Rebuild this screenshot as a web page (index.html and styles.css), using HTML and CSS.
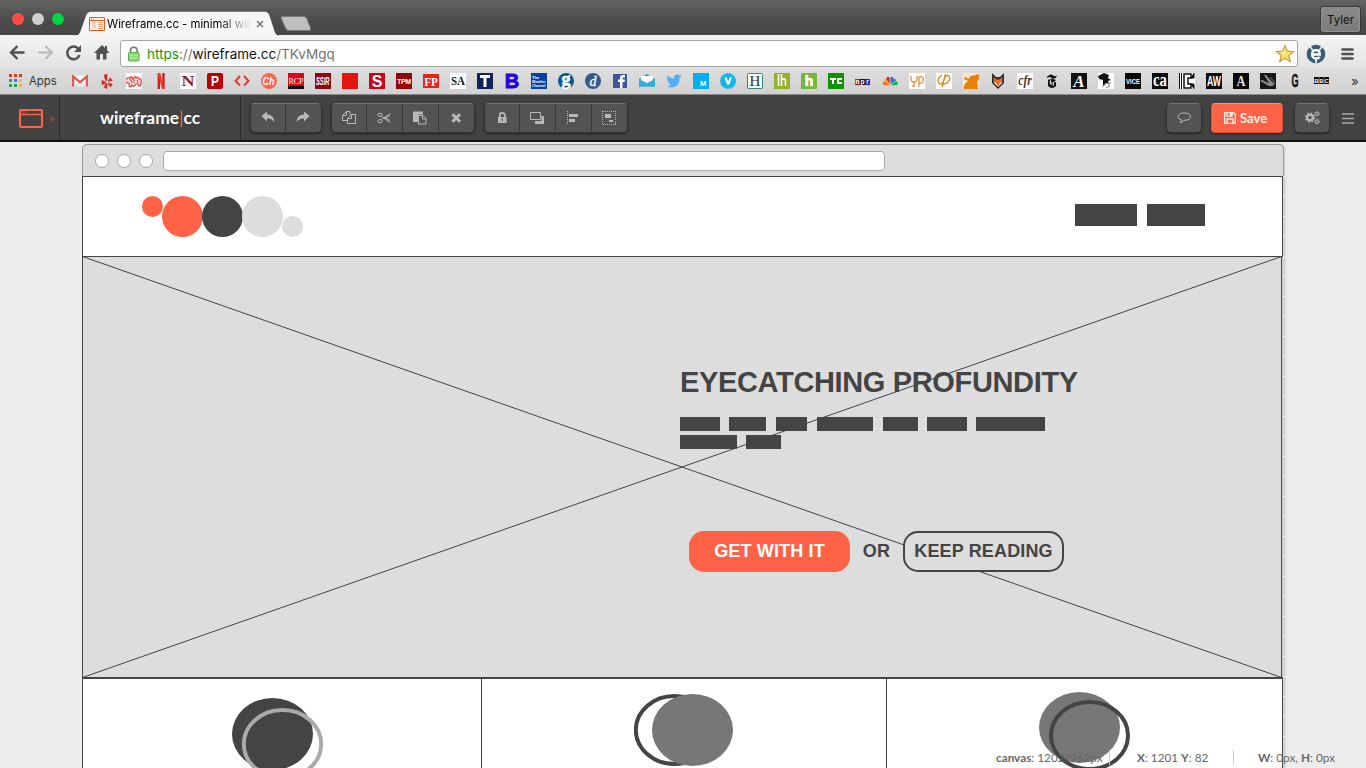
FILE: index.html
```html
<!DOCTYPE html>
<html lang="en">
<head>
<meta charset="utf-8">
<title>Wireframe.cc</title>
<link rel="stylesheet" href="styles.css">
</head>
<body>
<header class="titlebar">
  <div class="lights"><i class="light red"></i><i class="light grey"></i><i class="light green"></i></div>
  <div class="tab">
    <svg class="tab-shape" width="204" height="25" viewBox="0 0 204 25"><path d="M0 25C3 24 4 23 5 21L11 4Q12.500 .5 16 .5H190Q193 .5 194.500 4L200 21Q201 24 204 25Z" fill="#f6f6f6" stroke="#333" stroke-opacity=".35"/><path d="M1 24h202v1H1z" fill="#f5f5f5"/></svg>
    <svg class="favicon" width="16" height="14" viewBox="0 0 16 14"><path d="M.5.5h15v13H.5zM1 3.500h14" fill="#fff4ed" stroke="#f05a1e"/><path d="M2 2h1M4 2h1" stroke="#f05a1e"/><path d="M3 6h4M3 8h4M3 10h4M9 5.500h5M9 7.500h5M9 9.500h5M9 11.500h5" stroke="#f8a582"/></svg>
    <span class="tab-title">Wireframe.cc - minimal wir</span>
    <svg class="close" width="8" height="8" viewBox="0 0 8 8"><path d="M1 1l6 6M7 1L1 7" stroke="#777" stroke-width="1.500"/></svg>
  </div>
  <svg class="newtab" width="32" height="16" viewBox="0 0 32 16"><path d="M3 .5H24Q26 .5 27 3L30.500 12Q31 14.500 29 14.500H9Q6.500 14.500 5.500 12L1 2Q1 .5 3 .5Z" fill="#bebebe" stroke="#777"/></svg>
  <span class="profile">Tyler</span>
</header>

<nav class="navbar">
  <svg width="110" height="30" viewBox="0 0 110 30" class="nav-icons">
    <path d="M17.500 7l-6.500 6.500 6.500 6.500M11.500 13.500h13" fill="none" stroke="#505050" stroke-width="2.400"/>
    <path d="M45.500 7l6.500 6.500-6.500 6.500M51 13.500H38" fill="none" stroke="#b9b9b9" stroke-width="2"/>
    <path d="M78.500 10A6.300 6.300 0 1 0 79.500 16" fill="none" stroke="#505050" stroke-width="2.500"/><path d="M81 6v7h-7z" fill="#505050"/>
    <path d="M94 14l8-8 3 3V7h2v4l2 2.500V14h-2.500v6.500h-3.500V15h-3v5.500h-3.500V14z" fill="#505050"/>
  </svg>
  <div class="address">
    <svg class="lock" width="14" height="16" viewBox="0 0 14 16"><path d="M3.500 8V4.500a3.300 3.300 0 0 1 6.600 0V8" fill="none" stroke="#777" stroke-width="1.600"/><rect x="1.500" y="6.500" width="10.500" height="8.500" rx="1" fill="#8fdc78" stroke="#56ab43"/><path d="M2 9.500h9.500M2 12h9.500" stroke="#b2eba1"/></svg>
    <span class="url"><b class="secure">https</b><b class="muted">://</b>wireframe.cc<b class="muted">/TKvMgq</b></span>
    <svg class="star" width="20" height="20" viewBox="0 0 20 20"><path d="M10 1.500l2.400 5.600 6.100.5-4.700 4 1.500 6L10 14.400l-5.300 3.200 1.500-6-4.700-4 6.100-.5z" fill="#ffdf65" stroke="#c6923c" stroke-width="1.100"/><path d="M10 4v6l-5-1.500 3.500-.5z" fill="#fff3ae"/></svg>
  </div>
  <svg width="20" height="20" viewBox="0 0 20 20"><circle cx="10" cy="10" r="9.300" fill="#395d73"/><path d="M4 2.500l2.500 3.500M16 2.500L13.500 6M10 15v4" stroke="#fff" stroke-width="1.500"/><path d="M6.500 10.500h7.300q0-4.300-3.800-4.300t-3.900 4.300q.2 4 4 4 2.400 0 3.600-1.500" fill="none" stroke="#fff" stroke-width="2.300"/></svg>
  <svg class="menu" width="14" height="14" viewBox="0 0 14 14"><path d="M1.500 2.500h10M1.500 7h10M1.500 11.500h10" stroke="#505050" stroke-width="2.700" stroke-linecap="round"/></svg>
</nav>

<nav class="bookmarks">
  <svg class="apps" width="13" height="13" viewBox="0 0 13 13"><path d="M0 0h3v3H0zM5 0h3v3H5zM10 0h3v3h-3z" fill="#ea3323"/><path d="M0 5h3v3H0zM0 10h3v3H0zM5 10h3v3H5z" fill="#22a45b"/><path d="M5 5h3v3H5z" fill="#277dea"/><path d="M10 5h3v3h-3zM10 10h3v3h-3z" fill="#f9b716"/></svg>
  <span class="apps-label">Apps</span>
  <div class="marks">
    <svg viewBox="0 0 16 16"><path d="M1 2.500h14v11H1z" fill="#f5f2f1"/><path d="M3 13L8 8.500l5 4.500" fill="none" stroke="#ccc"/><path d="M1.200 13.500V3.500L8 9.200l6.800-5.700v10" fill="none" stroke="#dc4b40" stroke-width="2"/></svg>
    <svg viewBox="0 0 16 16"><path d="M5 2.200L8 1.200v6.300L6.800 7.700zM3 7.500l3.700 1.700v1.200L3 11.600zM8 10.500v5l-3-1.200 2-3.700zM9.500 10l3.700 1.200-1.700 2.800-2.400-3zM9.200 8.500l1.800-3.800 2.300 2.700z" fill="#d3291c" stroke="#d3291c" stroke-linejoin="round" stroke-width=".6"/></svg>
    <svg viewBox="0 0 16 16"><path d="M0 0h16v16H0z" fill="#fff"/><path d="M1 6q1-3 3 0 0-3 2-2 1 4 2 1 1-3 2 0 2-2 3 1 3-1 2 4 0 4-2 3-1-3-3-2-2 4-4 1-1 3-3 1 1-3-1-3-4-1-3-4z" fill="#f9d9d7" stroke="#e13b32" stroke-width="1.200"/><path d="M5 7l1 3M8 7v3M11 7l1 3" stroke="#e13b32"/></svg>
    <svg viewBox="0 0 16 16"><path d="M5.800 0v16M10.500 0v16" stroke="#ca1c17" stroke-width="2.300"/><path d="M4.700 0h2.600l4.200 16H9z" fill="#f4362b"/></svg>
    <svg viewBox="0 0 16 16"><path d="M0 0h16v16H0z" fill="#fff"/><text class="serif" x="8" y="12.500" font-size="14" textLength="13" lengthAdjust="spacingAndGlyphs" fill="#8d1c2a">N</text></svg>
    <svg viewBox="0 0 16 16"><rect width="16" height="16" rx="2" fill="#b90007"/><text class="sans" x="8" y="13" font-size="14" textLength="8" lengthAdjust="spacingAndGlyphs" fill="#fff">P</text></svg>
    <svg viewBox="0 0 16 16"><path d="M6 3L1.500 8 6 12.500M10 3l4.500 5-4.500 4.500" fill="none" stroke="#e5372b" stroke-width="2"/></svg>
    <svg viewBox="0 0 16 16"><circle cx="8" cy="8" r="8" fill="#fb6651"/><text class="sans italic" x="7.600" y="12" font-size="11" textLength="12" lengthAdjust="spacingAndGlyphs" fill="#fff">Ch</text></svg>
    <svg viewBox="0 0 16 16"><path d="M0 0h16v16H0z" fill="#d8061d"/><path d="M0 13h16v3H0z" fill="#111"/><text class="serif thin" x="8" y="10.500" font-size="8.500" textLength="15" lengthAdjust="spacingAndGlyphs" fill="#fff">RCP</text></svg>
    <svg viewBox="0 0 16 16"><path d="M0 0h16v16H0z" fill="#8d0711"/><text class="sans italic" x="7.700" y="12" font-size="10.500" textLength="13.500" lengthAdjust="spacingAndGlyphs" fill="#fff">SSIR</text></svg>
    <svg viewBox="0 0 16 16"><path d="M0 0h16v16H0z" fill="#e5140d"/></svg>
    <svg viewBox="0 0 16 16"><path d="M0 0h16v16H0z" fill="#c4061b"/><text class="sans" x="8" y="13.500" font-size="16" fill="#fff">S</text></svg>
    <svg viewBox="0 0 16 16"><path d="M0 0h16v16H0z" fill="#960206"/><text class="sans" x="8" y="10.500" font-size="7" textLength="14" fill="#fff">TPM</text></svg>
    <svg viewBox="0 0 16 16"><path d="M0 1h16v14H0z" fill="#e7211f"/><text class="serif" x="8" y="12.500" font-size="12" textLength="13.500" lengthAdjust="spacingAndGlyphs" fill="#fff">FP</text></svg>
    <svg viewBox="0 0 16 16"><path d="M0 0h16v16H0z" fill="#fff"/><text class="serif" x="8" y="11.500" font-size="12.500" textLength="14" lengthAdjust="spacingAndGlyphs" fill="#111">SA</text></svg>
    <svg viewBox="0 0 16 16"><path d="M0 0h16v16H0z" fill="#10225b"/><path d="M3 2h10v3H9.500v9h-3V5H3z" fill="#fff"/></svg>
    <svg viewBox="0 0 16 16" class="spill"><text class="sans" x="8" y="15" font-size="20" stroke="#2500da" stroke-width=".9" fill="#2500da">B</text></svg>
    <svg viewBox="0 0 16 16"><path d="M0 0h16v16H0z" fill="#0841a0"/><g class="left" font-size="4" fill="#fff"><text x="1" y="6">The</text><text x="1" y="10" textLength="13.500" lengthAdjust="spacingAndGlyphs">Weather</text><text x="1" y="14" textLength="13.500" lengthAdjust="spacingAndGlyphs">Channel</text></g></svg>
    <svg viewBox="0 0 16 16" class="spill"><circle cx="8" cy="8" r="8" fill="#075a90"/><text class="serif" x="8" y="11.500" font-size="18" stroke="#fff" stroke-width=".7" fill="#fff">g</text></svg>
    <svg viewBox="0 0 16 16"><circle cx="8" cy="8" r="8" fill="#35588e"/><text class="serif italic thin" x="8" y="12.500" font-size="14" stroke="#fff" stroke-width=".3" fill="#fff">d</text></svg>
    <svg viewBox="0 0 16 16"><path d="M1 1h14v14H1z" fill="#3b5998"/><path d="M8 15V9H6V6.500h2V5q0-3 3-3h2v2.500h-1.500q-1 0-1 1v1H13L12.500 9h-2v6z" fill="#fff"/></svg>
    <svg viewBox="0 0 16 16"><path d="M0 6l8-5 8 5v7.500H0z" fill="#1d9fc8"/><path d="M2 3h12v5l-6 3-6-3z" fill="#fff"/><path d="M0 6l8 4 8-4v7.500H0z" fill="#36aed6"/></svg>
    <svg viewBox="0 0 16 16"><path d="M15.500 4l-2 1Q13.500 14 6 14.500q-3 0-5-1.500 3 0 4-1.500-2 0-3-2h1.500Q1 8.500 1 6l1.500.5Q.5 4.500 1.500 2.500 4 5 8 5.500q0-4 3-4 1.500 0 2.500 1l2-.5-1 1.500z" fill="#55acee"/></svg>
    <svg viewBox="0 0 16 16"><path d="M0 0h16v16H0z" fill="#06aef0"/><text class="sans" x="10" y="13" font-size="7.500" fill="#fff">M</text></svg>
    <svg viewBox="0 0 16 16"><circle cx="8" cy="8" r="7.300" fill="#18b5e9" stroke="#18b5e9" stroke-width="1.500" stroke-dasharray="2 .7"/><path d="M4.500 4.500h2.300L8.200 8.500l1.500-4h2.200L9.300 11.500H7z" fill="#fff"/></svg>
    <svg viewBox="0 0 16 16"><rect x=".5" y=".5" width="15" height="15" rx="1" fill="#f3faf7" stroke="#34857d"/><text class="serif thin" x="8" y="13" font-size="15" fill="#333">H</text></svg>
    <svg viewBox="0 0 16 16"><path d="M0 0h16v16H0z" fill="#91b32c"/><path d="M4.500 1v12M7.500 1v12M7.500 7q4-3 4 1v5" stroke="#fff" stroke-width="1.600" fill="none"/></svg>
    <svg viewBox="0 0 16 16"><rect width="16" height="16" rx="1" fill="#72b63a"/><text class="sans" x="8" y="13" font-size="14" stroke="#fff" stroke-width=".7" fill="#fff">h</text></svg>
    <svg viewBox="0 0 16 16"><path d="M0 0h16v16H0z" fill="#109300"/><path d="M2 5h6v2H6v4H4V7H2zM9 5h5v2h-3v2h3v2H9z" fill="#fff"/></svg>
    <svg viewBox="0 0 16 16"><path d="M0 6h5v6H0z" fill="#e30d14"/><path d="M5 6h5v6H5z" fill="#111"/><path d="M10 6h5v6h-5z" fill="#1c1eea"/><g class="sans" font-size="6.500" fill="#fff"><text x="2.500" y="10.500">n</text><text x="7.500" y="10.500">p</text><text x="12.500" y="10.500">r</text></g></svg>
    <svg viewBox="0 0 16 16"><path d="M8 12.500L1.500 12Q-.5 9.500 2 8.500L4 8.800z" fill="#f37021"/><path d="M7.500 11.500L2.500 8Q2 5 5 5.500z" fill="#eab32b"/><path d="M7.500 11L4.500 6Q5 2.500 7.500 4.500z" fill="#d71a43"/><path d="M8.500 11l-.2-6.500Q11 2.500 11.700 6z" fill="#6460aa"/><path d="M8.600 11.500L11.500 6Q14 5 13.700 8z" fill="#0089d0"/><path d="M9 12.500l5-4.200q3 1.200 1 3.700z" fill="#0db14b"/></svg>
    <svg viewBox="0 0 16 16"><path d="M0 0h16v16H0z" fill="#fff"/><path d="M2 3v3q0 3 3 3t3-3V3M5 8v5M3 13h3M10 14V4q5-1 4.500 3T10 10" fill="none" stroke="#e6964b" stroke-width="1.400"/></svg>
    <svg viewBox="0 0 16 16"><path d="M0 0h16v16H0z" fill="#fff"/><path d="M9.500 1L6 14M6 2Q0 6 3 10q3 3 5-3 2-6 5-4 2 3-1 6-3 3-6 2" fill="none" stroke="#e88926" stroke-width="1.400"/></svg>
    <svg viewBox="0 0 16 16"><path d="M0 0h16v16H0z" fill="#fbe9d8"/><path d="M1 5l2-1 2 2 3-3 2-1 1 1 3-2 2 1v4l-2 3 1 6v1H1q-1-5 4-8-2-1-4-2z" fill="#e78109"/></svg>
    <svg viewBox="0 0 16 16"><path d="M2 0l4 4h4l4-4v10l-6 6-6-6z" fill="#30302d"/><path d="M3.500 4l3 2.500h3l3-2.500-.5 6-4 4-4-4z" fill="#ec6b36"/><path d="M3.500 9l2.500 1 2 4zM12.500 9L10 10l-2 4z" fill="#fff"/></svg>
    <svg viewBox="0 0 16 16"><path d="M0 0h16v16H0z" fill="#fff"/><text class="serif italic" x="8" y="12" font-size="14" textLength="13.500" lengthAdjust="spacingAndGlyphs" fill="#503126">cfr</text></svg>
    <svg viewBox="0 0 16 16"><path d="M4 3q3-3 6 0 2 1 3-1-1 5-5 3Q5 3 4 5q-2-1 0-2zM12 7q-5-2-5 0-1 3 5 2v4q-4 4-8 0V7q2-1 3-1-2 2-1 5 3 3 4 1V9" fill="#111"/><path d="M8 5v9" stroke="#111"/></svg>
    <svg viewBox="0 0 16 16"><path d="M0 0h16v16H0z" fill="#111"/><text class="serif italic" x="8" y="14" font-size="17" fill="#fff">A</text></svg>
    <svg viewBox="0 0 16 16"><path d="M0 0h16v16H0z" fill="#fff"/><path d="M0 3l6-3 5 2-1 3 3 2-3 1 1 3-3-1-3 3V7L1 6z" fill="#111"/><path d="M4 14l4-3M10 13l3-4M8 15l4-2" stroke="#888" fill="none"/></svg>
    <svg viewBox="0 0 16 16"><path d="M0 0h16v16H0z" fill="#080808"/><text class="sans" x="8" y="10.500" font-size="7.500" textLength="14" lengthAdjust="spacingAndGlyphs" fill="#fff">VICE</text></svg>
    <svg viewBox="0 0 16 16"><path d="M0 0h16v16H0z" fill="#080808"/><text class="serif" x="8" y="13" font-size="19" textLength="14" lengthAdjust="spacingAndGlyphs" fill="#fff">ca</text></svg>
    <svg viewBox="0 0 16 16"><path d="M0 0h16v16H0z" fill="#fff"/><path d="M.5 0v16M2.500 0v16M15 0v5h-4M15 16v-5h-4" stroke="#111"/><path d="M12 1H5v14h7v-4H9V5h3z" fill="#fff" stroke="#111" stroke-width="1.500"/></svg>
    <svg viewBox="0 0 16 16"><path d="M0 0h16v16H0z" fill="#080808"/><text class="sans" x="8" y="13" font-size="15" textLength="14" lengthAdjust="spacingAndGlyphs" fill="#fff">AW</text></svg>
    <svg viewBox="0 0 16 16"><path d="M0 0h16v16H0z" fill="#080808"/><text class="serif" x="8" y="13" font-size="15" textLength="9" lengthAdjust="spacingAndGlyphs" fill="#ddd">A</text></svg>
    <svg viewBox="0 0 16 16"><path d="M0 0h16v16H0z" fill="#181818"/><path d="M0 8q2-2 4 0l7 3 2 2H9zM4 2q2-1 3 1l7 8-1 2-4-3z" fill="#888"/><path d="M10 4q3 3 5 7" stroke="#777" fill="none"/></svg>
    <svg viewBox="0 0 16 16"><text class="sans" x="8" y="14" font-size="18" textLength="7" lengthAdjust="spacingAndGlyphs" stroke="#111" stroke-width=".5" fill="#111">G</text></svg>
    <svg viewBox="0 0 16 16"><path d="M0 4h4.700v7H0zM5.200 4h4.600v7H5.200zM10.300 4H15v7h-4.700z" fill="#080808"/><g class="sans" font-size="6" fill="#fff"><text x="2.400" y="9.700">B</text><text x="7.500" y="9.700">B</text><text x="12.600" y="9.700">C</text></g></svg>
  </div>
  <span class="more">»</span>
</nav>

<div class="toolbar">
  <div class="shape"><svg width="38" height="22" viewBox="0 0 38 22"><rect x="1" y="3" width="22" height="17" rx="1" fill="none" stroke="#ff6347" stroke-width="2"/><path d="M1 7.500h22" stroke="#ff6347" stroke-width="1.500"/><path d="M3 5h1.500M5.500 5H7" stroke="#ff6347" stroke-width="1"/><path d="M31 8l6 4-6 4z" fill="#79483e"/></svg></div>
  <div class="brand">wireframe<i>|</i>cc</div>
  <div class="tools">
    <div class="group">
      <button><svg viewBox="0 0 16 16"><path d="M1.500 6L7 1.500v3q7 0 7.500 8-2.500-4.500-7.500-4v3z"/></svg></button>
      <button><svg viewBox="0 0 16 16"><path d="M14.500 6L9 1.500v3q-7 0-7.500 8 2.500-4.500 7.500-4v3z"/></svg></button>
    </div>
    <div class="group">
      <button><svg viewBox="0 0 16 16"><path class="line" d="M9 1.500H5.500L1.500 5.500v5h5M5.500 1.500v4h-4M9 1.500v3M10.500 4.500h4v9h-8V8.500zM10.500 4.500v4h-4"/></svg></button>
      <button><svg viewBox="0 0 16 16"><path class="line" d="M5.500 6.500l9 6M5.500 9.500l9-6M8.500 8.500l5.500-3M8.500 7.500l5.500 3"/><ellipse class="line" cx="4" cy="4.800" rx="2.200" ry="1.600"/><ellipse class="line" cx="4" cy="11.200" rx="2.200" ry="1.600"/></svg></button>
      <button><svg viewBox="0 0 16 16"><path d="M1 1.500h10v3H6.500V12H1z"/><path class="line" d="M6.500 5.500h4.500l3 3v5.500H6.500zM10.500 5.500v3.500H14"/></svg></button>
      <button><svg viewBox="0 0 16 16"><path d="M4.500 11.800L12 4.300M4.500 4.300l7.500 7.500" stroke="#bbb" stroke-width="3"/></svg></button>
    </div>
    <div class="group">
      <button><svg viewBox="0 0 16 16"><path d="M4 7h8.500v6H4z"/><path class="line" d="M5.700 7V5.500a2.600 2.600 0 0 1 5.200 0V7" stroke-width="1.700"/><path d="M8.200 8v3" stroke="#555"/></svg></button>
      <button><svg viewBox="0 0 16 16"><path class="line" d="M1.500 2.500h10v7h-10z"/><path d="M12.500 6H15v8H6v-3h6.500z"/></svg></button>
      <button><svg viewBox="0 0 16 16"><path class="line" d="M2.500 1v14" stroke-dasharray="1 1"/><path d="M4 4h9v3H4zM4 9h6v3H4z"/></svg></button>
      <button><svg viewBox="0 0 16 16"><path class="line" d="M2 1.500h13M2 14.500h13M1.500 1v14M14.500 1v14" stroke-dasharray="1 1"/><path d="M4 4h6v4H4zM8 10h4v2H8z"/></svg></button>
    </div>
  </div>
  <div class="actions">
    <div class="group"><button><svg viewBox="0 0 16 16"><path class="line" d="M4 12.500q1.500-1 1.300-2.700Q2 9 2 6.700 2 3 8.200 3t6.200 3.700Q14.400 10.300 8 10.300 6.500 12.500 4 12.500z"/></svg></button></div>
    <button class="save"><svg width="12" height="12" viewBox="0 0 12 12"><path d="M.7.7h8.800l1.800 1.800v8.800H.7zM3 .7v3.500h5V.7M3 11V7h6v4" fill="none" stroke="#fff0ec" stroke-width="1.300"/><path d="M6 1h2v3H6z" fill="#fff0ec"/></svg>Save</button>
    <div class="group"><button><svg viewBox="0 0 16 16"><circle class="line" cx="6" cy="7.500" r="2.900" stroke-width="2.300"/><circle class="line" cx="6" cy="7.500" r="4.400" stroke-width="1.400" stroke-dasharray="1.728 1.728"/><circle class="line" cx="13" cy="3.700" r="1.500"/><circle class="line" cx="13" cy="11.500" r="1.500"/><circle class="line" cx="13" cy="3.700" r="2.300" stroke-dasharray="1 .8"/><circle class="line" cx="13" cy="11.500" r="2.300" stroke-dasharray="1 .8"/></svg></button></div>
    <svg class="burger" width="12" height="11" viewBox="0 0 12 11"><path d="M0 1h12M0 5.500h12M0 10h12" stroke="#aaa" stroke-width="1.500"/></svg>
  </div>
</div>

<main class="workspace">
  <section class="canvas">
    <div class="browser"><i></i><i></i><i></i><span></span></div>
    <div class="page">
      <div class="page-head">
        <svg width="162" height="42" viewBox="0 0 162 42"><circle cx="10.500" cy="10.500" r="10.500" fill="#ff6347"/><circle cx="40.500" cy="20.500" r="20.500" fill="#ff6347"/><circle cx="80.500" cy="20.500" r="20.500" fill="#444"/><circle cx="120.500" cy="20.500" r="20.500" fill="#ddd"/><circle cx="150.500" cy="30.500" r="10.500" fill="#ddd"/></svg>
        <div class="links"><i class="w62"></i><i class="w58"></i></div>
      </div>
      <div class="hero">
        <svg class="cross" width="1200" height="422" viewBox="0 0 1200 422"><path d="M.5.5l1199 421M1199.500.5L.5 421.500M1199.500 0v422" fill="none" stroke="#444"/></svg>
        <h1>EYECATCHING PROFUNDITY</h1>
        <div class="words lead"><i class="w40"></i><i class="w37"></i><i class="w31"></i><i class="w56"></i><i class="w35"></i><i class="w40"></i><i class="w69"></i></div>
        <div class="words"><i class="w57"></i><i class="w35"></i></div>
        <div class="cta"><span class="pill solid">GET WITH IT</span><span class="or">OR</span><span class="pill outline">KEEP READING</span></div>
      </div>
      <div class="columns">
        <div class="col first"><svg width="94" height="90" viewBox="0 0 94 90"><ellipse cx="40.500" cy="36" rx="40.500" ry="36" fill="#444"/><ellipse cx="50.500" cy="46" rx="38.700" ry="34" fill="none" stroke="#aaa" stroke-width="4"/></svg></div>
        <div class="col second"><svg width="102" height="90" viewBox="0 0 102 90"><ellipse cx="40.500" cy="36" rx="38.700" ry="34" fill="none" stroke="#444" stroke-width="4"/><ellipse cx="58.500" cy="36" rx="40.500" ry="36" fill="#777"/></svg></div>
        <div class="col third"><svg width="94" height="90" viewBox="0 0 94 90"><ellipse cx="40.500" cy="35.500" rx="40.500" ry="35.500" fill="#777"/><ellipse cx="50.500" cy="43.500" rx="38.500" ry="33.500" fill="none" stroke="#444" stroke-width="4"/></svg></div>
      </div>
    </div>
  </section>
  <aside class="resize"></aside>
</main>
<footer class="status"><span class="size"><b>canvas</b>: 1202/962px</span><span class="pos"><b>X</b>: 1201 <b>Y</b>: 82</span><span class="dims"><b>W</b>: 0px, <b>H</b>: 0px</span></footer>
</body>
</html>
```
FILE: styles.css
```css
* { box-sizing: border-box; }
body { margin: 0; width: 1366px; height: 768px; overflow: hidden; display: flex; flex-direction: column; background: #ededed; font-family: Inter, "Liberation Sans", sans-serif; position: relative; }
svg { display: block; flex: none; }
i { font-style: normal; }

/* Browser chrome */
.titlebar { height: 35px; flex: none; display: flex; align-items: flex-start; padding-left: 12px; background: linear-gradient(#636363, #4b4b4b 60%, #474747); }
.lights { display: flex; gap: 8px; padding-top: 13px; width: 63px; }
.light { width: 12px; height: 12px; border-radius: 50%; }
.light.red { background: #ff4a49; }
.light.grey { background: #cfcfcf; }
.light.green { background: #06d33f; }
.tab { position: relative; display: flex; align-items: center; width: 204px; height: 25px; margin-top: 11px; padding-left: 14px; }
.tab-shape { position: absolute; left: 0; top: 0; }
.favicon, .tab-title, .close { position: relative; }
.tab-title { width: 147px; margin-left: 2px; font-size: 11.3px; color: #000; white-space: nowrap; -webkit-mask-image: linear-gradient(90deg, #000 76%, transparent 98%); mask-image: linear-gradient(90deg, #000 76%, transparent 98%); }
.close { margin-left: 2px; }
.newtab { margin: 16px 0 0 1px; }
.profile { margin: 6px 5px 0 auto; width: 41px; height: 27px; border: 1px solid #383838; border-radius: 3px; background: linear-gradient(#8b8b8b, #7b7b7b); box-shadow: inset 0 0 0 1px #929292; text-align: center; font-size: 11.5px; line-height: 26px; color: #111; }
.navbar { height: 32px; flex: none; display: flex; align-items: center; background: linear-gradient(#f5f5f5, #e3e3e3); }
.nav-icons { width: 110px; margin: 6px 10px 0 0; }
.address { display: flex; align-items: center; width: 1178px; height: 27px; margin: 5px 8px 0 0; border: 1px solid #a6a6a6; border-radius: 3px; background: #fff; padding: 0 2px 0 6px; }
.navbar > svg:not(.nav-icons) { margin-top: 5px; }
.url { font-size: 13.5px; margin-left: 6px; color: #111; white-space: nowrap; }
.url b { font-weight: 400; }
.url .secure { color: #0a9b0a; }
.url .muted { color: #727272; }
.star { margin-left: auto; }
.menu { margin-left: 15px; }
.bookmarks { height: 28px; flex: none; display: flex; align-items: center; padding-left: 9px; background: linear-gradient(#dfdfdf, #d0d0d0); border-bottom: 1px solid #888; }
.apps-label { width: 43px; margin-left: 7px; font-size: 11.3px; color: #333; }
.marks { display: flex; gap: 11px; }
.marks svg { width: 16px; height: 16px; }
.marks .spill { overflow: visible; }
.marks text { text-anchor: middle; }
.marks .left text { text-anchor: start; font-family: "Liberation Sans", sans-serif; font-weight: 700; }
.sans { font-family: "Liberation Sans", sans-serif; font-weight: 700; }
.serif { font-family: "Liberation Serif", serif; font-weight: 700; }
.thin { font-weight: 400; }
.italic { font-style: italic; }
.more { margin-left: 21px; font-size: 13px; color: #333; }

/* Editor toolbar */
.toolbar { height: 47px; flex: none; display: flex; background: #424242; border-bottom: 2px solid #111; font-family: Lato, sans-serif; }
.shape { width: 60px; padding: 12px 0 0 19px; border-right: 1px solid #2b2b2b; }
.brand { width: 181px; border-right: 1px solid #2b2b2b; text-align: center; font-size: 17.4px; font-weight: 700; line-height: 46px; color: #fff; }
.brand i { color: #ff6347; font-weight: 400; }
.tools { display: flex; gap: 9px; padding: 8px 0 0 9px; }
.group { display: flex; height: 30px; border: 1px solid #333; border-top-color: #777; border-radius: 5px; overflow: hidden; background: #535353; box-shadow: 0 1px 2px #252525; }
.group button { width: 36px; padding: 0 0 0 9px; border: 0; border-right: 1px solid #383838; background: none; display: flex; align-items: center; }
.group button:first-child { width: 35px; }
.group button:last-child { width: 35px; border: 0; }
.group button:only-child { width: 34px; }
.group svg { width: 16px; height: 16px; fill: #b8b8b8; }
.group .line { fill: none; stroke: #b8b8b8; }
.actions { margin-left: auto; display: flex; gap: 9px; padding: 8px 12px 0 0; }
.save { width: 72px; height: 30px; margin-right: 2px; border: 1px solid #dd513a; border-top-color: #ff9277; border-radius: 4px; background: #ff6347; display: flex; align-items: center; gap: 4px; padding: 0 0 1px 12px; color: #fff0ec; font: 700 13px Lato, sans-serif; box-shadow: 0 1px 2px #252525; }
.burger { margin: 10px 0 0 3px; }

/* Wireframe document */
.workspace { flex: 1; min-height: 0; display: flex; align-items: stretch; padding: 2px 0 0 82px; }
.canvas { width: 1201px; height: 624px; }
.browser { width: 1202px; height: 32px; display: flex; align-items: center; gap: 8px; padding: 0 0 0 12px; background: #ddd; border: 1px solid #999; border-bottom: 0; border-radius: 5px 5px 0 0; box-shadow: 1px 0 2px #ccc; }
.browser i { width: 14px; height: 14px; border: 1px solid #aaa; border-radius: 50%; background: #fff; }
.browser span { width: 722px; height: 20px; margin-left: 2px; border: 1px solid #aaa; border-radius: 4px; background: #fff; }
.page { border: 1px solid #444; border-width: 1px 0 0 1px; height: 592px; background: #d2d2d2; }
.page-head { height: 80px; display: flex; justify-content: space-between; padding: 19px 77px 0 59px; border: 1px solid #444; border-width: 0 1px 1px 0; background: #fff; }
.links { display: flex; gap: 10px; padding-top: 8px; }
.links i { height: 22px; background: #444; }
.hero { position: relative; height: 420px; margin-right: 1px; padding: 111px 0 0 597px; background: #ddd; color: #444; font-family: "Liberation Sans", sans-serif; }
.cross { position: absolute; left: -1px; top: -1px; }
h1 { position: relative; height: 49px; margin: 0; font-size: 29px; letter-spacing: -.35px; line-height: 28px; white-space: nowrap; }
.words { position: relative; display: flex; gap: 9px; height: 14px; margin-bottom: 4px; }
.words i { background: #444; }
.lead i:nth-child(3), .lead i:nth-child(4), .lead i:nth-child(5) { margin-left: 1px; }
.w31 { width: 31px; } .w35 { width: 35px; } .w37 { width: 37px; } .w40 { width: 40px; } .w56 { width: 56px; } .w57 { width: 57px; } .w58 { width: 58px; } .w62 { width: 62px; } .w69 { width: 69px; }
.cta { position: relative; display: flex; align-items: center; margin: 82px 0 0 9px; font-size: 18px; font-weight: 700; letter-spacing: .15px; }
.pill { width: 161px; height: 41px; border-radius: 15px; text-align: center; line-height: 40px; white-space: nowrap; }
.solid { background: #ff6347; color: #fff; }
.outline { border: 2px solid #444; background: #ddd; line-height: 36px; }
.or { width: 53px; text-align: center; padding-bottom: 1px; }
.columns { display: flex; height: 91px; border-top: 2px solid #444; border-right: 1px solid #444; overflow: hidden; background: #fff; }
.col { border-right: 1px solid #444; }
.first { width: 399px; padding: 19px 0 0 149px; }
.second { width: 405px; padding: 15px 0 0 152px; }
.third { flex: 1; border: 0; padding: 13px 0 0 152px; }
.resize { width: 2px; margin-top: 32px; background: repeating-linear-gradient(#d2d2d2 0 20px, #f8f8f8 20px 21px); background-size: 2px 20px; background: linear-gradient(#f8f8f8 1px, #d2d2d2 1px) 0 0 / 2px 20px; box-shadow: 1px 0 2px #ddd; }

/* Coordinates readout */
.status { position: absolute; left: 996px; top: 750px; display: flex; font: 11.75px/15px Lato, sans-serif; color: #666; }
.status span { white-space: nowrap; }
.size { width: 114px; border-right: 1px solid #ccc; }
.pos { width: 124px; padding-left: 27px; border-right: 1px solid #ccc; }
.dims { padding-left: 24px; }
```
